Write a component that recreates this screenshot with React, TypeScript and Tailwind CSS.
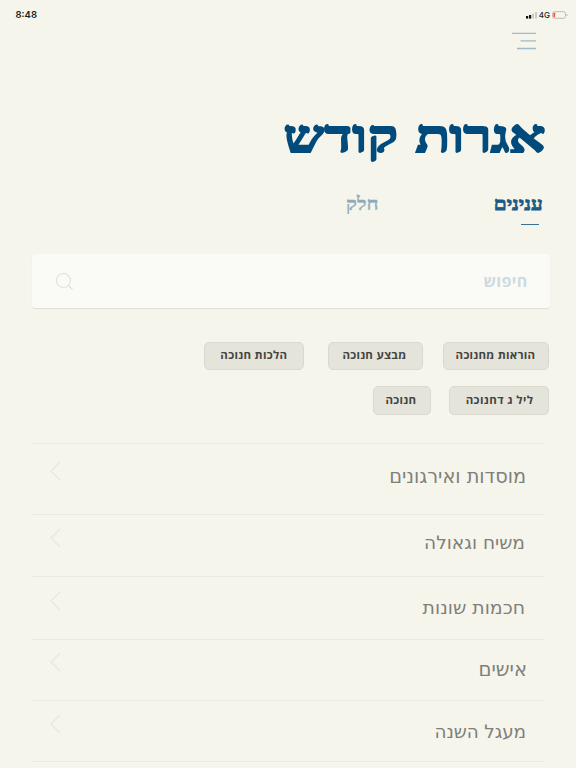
import React from "react";

const sans = "font-['Open_Sans','DejaVu_Sans',sans-serif]";

const chips: [string, string, string][][] = [
  [
    ["הוראות מחנוכה", "w-[106px] pr-[13px]", "tracking-[0.250px]"],
    ["מבצע חנוכה", "w-[95px] pr-[16px] mr-[20px]", "tracking-[0.250px]"],
    ["הלכות חנוכה", "w-[100px] pr-[16px] mr-[24px]", "tracking-[0.300px]"],
  ],
  [
    ["ליל ג דחנוכה", "w-[100px] pr-[15px]", "tracking-[0.400px]"],
    ["חנוכה", "w-[58px] pr-[14px] mr-[18px]", "tracking-[0.300px]"],
  ],
];

const rows: [string, string, string, string][] = [
  ["מוסדות ואירגונים", "h-[71px] pr-[18px]", "mt-[20px] text-[19.300px]", "mt-[17px]"],
  ["משיח וגאולה", "h-[61.500px] pr-[19px]", "mt-[15px] text-[18.600px]", "mt-[12.500px]"],
  ["חכמות שונות", "h-[63px] pr-[19px]", "mt-[17px] text-[18.900px]", "mt-[14px]"],
  ["אישים", "h-[61px] pr-[17px]", "mt-[17px] text-[19.500px]", "mt-[12.500px]"],
  ["מעגל השנה", "h-[61.500px] pr-[18px]", "mt-[18px] text-[18.400px] tracking-[-0.100px]", "mt-[13px]"],
];

export default function App() {
  return (
    <div dir="rtl" className={`h-[768px] w-[576px] overflow-hidden bg-[#f5f5ec] ${sans}`}>
      <header dir="ltr" className="flex h-[30px] items-center justify-between pr-[8px] pl-[15.500px] font-['Inter','Liberation_Sans',sans-serif] text-[#222]">
        <span className="text-[9.500px] font-semibold leading-none">8:48</span>
        <div className="flex items-center">
          <svg width="11" height="7" viewBox="0 0 11 7">
            <rect x="0" y="4" width="2.200" height="2.6" fill="#111" />
            <rect x="3" y="3" width="2.200" height="3.6" fill="#111" />
            <rect x="6" y="1.5" width="2" height="5.1" fill="#ccccc6" />
            <rect x="9" y="0" width="2" height="6.6" fill="#ccccc6" />
          </svg>
          <span className="mx-[2px] text-[8px] font-medium leading-none">4G</span>
          <svg width="16" height="8" viewBox="0 0 16 8" fill="none">
            <rect x="0.5" y="0.7" width="13" height="6.6" rx="2" stroke="#bdbbb6" />
            <rect x="1.5" y="1.8" width="1.6" height="4.4" rx=".5" fill="#ed4548" />
            <path d="M15 3v2" stroke="#bdbbb6" />
          </svg>
        </div>
      </header>
      <nav className="flex h-[26px] pt-[2px] pr-[40px]">
        <svg width="24" height="18" viewBox="0 0 24 18" stroke="#9fbac6" strokeWidth="1.3">
          <path d="M0 1.3h24M8.5 8.9h15.500M5 16.500h19" />
        </svg>
      </nav>
      <div className="flex h-[118px] items-start pt-[51px] pr-[31px]">
        <h1 className="origin-right scale-x-[1.270] whitespace-nowrap font-['Liberation_Serif',serif] text-[45px] font-bold leading-[60px] text-[#004b7c] [-webkit-text-stroke:1.800px_#004b7c]"><span className="tracking-[-0.600px]">אגרות</span>{" "}<span className="mr-[2px] tracking-[0.400px]">קודש</span></h1>
      </div>
      <div className="flex h-[80px] pt-[16px] pr-[33px] font-['Liberation_Serif',serif] text-[18.500px] font-bold leading-[28px]">
        <div className="flex w-[164px] flex-col items-start text-[#1b5b86]">
          <span className="origin-right scale-x-[1.120] [-webkit-text-stroke:0.800px_#1b5b86]">ענינים</span>
          <span className="mt-[5.500px] mr-1 h-[1.500px] w-[18px] bg-[#3b7195]" />
        </div>
        <span className="h-[28px] origin-right scale-x-[1.100] text-[#8fabb9] [-webkit-text-stroke:0.300px_#8fabb9]">חלק</span>
      </div>
      <div className="mr-[26.500px] flex h-[54px] w-[518px] items-center justify-between rounded-[3px] bg-[#fafbf6] pr-[22px] pl-[24.500px] shadow-[0_1px_1px_#dedfd4]">
        <span className="text-[16px] font-bold leading-none tracking-[0.300px] text-[#cddae0]">חיפוש</span>
        <svg width="17" height="17" viewBox="0 0 17 17" fill="none" stroke="#dfe0da" strokeWidth="1.100">
          <circle cx="7.500" cy="7.500" r="7" />
          <path d="M12.500 12.500l4 4" />
        </svg>
      </div>
      <div className="flex h-[135px] flex-col gap-4 pt-[33.500px] pr-[26.600px]">
        {chips.map((line, i) => (
          <div key={i} className="flex">
            {line.map(([t, c, s]) => (
              <div key={t} className={`flex h-[28.500px] items-center rounded-[5px] border border-[#d9d9cf] bg-[#e4e4db] pb-[2px] ${c}`}>
                <span className={`whitespace-nowrap text-[11.500px] font-bold leading-none text-[#444440] ${s}`}>{t}</span>
              </div>
            ))}
          </div>
        ))}
      </div>
      <div className="mr-[32px] w-[512px] border-b border-[#eae9e1]">
        {rows.map(([t, c, m, a]) => (
          <div key={t} className={`flex items-start justify-between border-t border-[#eae9e1] pl-[18px] ${c}`}>
            <span className={`whitespace-nowrap font-['DejaVu_Sans',sans-serif] leading-[26px] text-[#80807a] ${m}`}>{t}</span>
            <svg width="11" height="20" viewBox="0 0 11 20" fill="none" stroke="#e7e7e0" strokeWidth="1.200" className={a}>
              <path d="M10 1L1 10l9 9" />
            </svg>
          </div>
        ))}
      </div>
    </div>
  );
}
